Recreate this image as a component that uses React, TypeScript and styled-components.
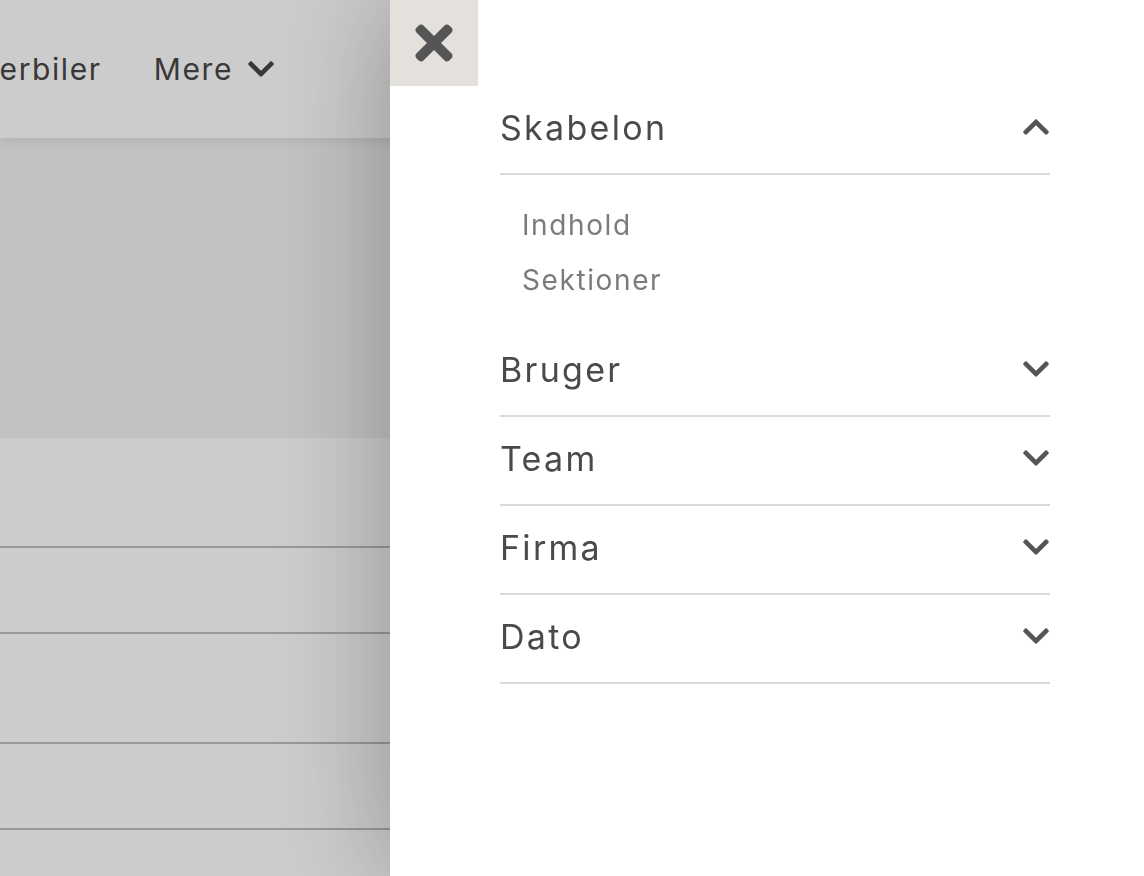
import React, { useState } from "react";
import styled, { createGlobalStyle } from "styled-components";
import { FaChevronDown, FaChevronUp, FaTimes } from "react-icons/fa";

const GlobalStyle = createGlobalStyle`
  * {
    box-sizing: border-box;
  }
  html, body {
    margin: 0;
    padding: 0;
    background: #fff;
    font-family: Inter, "Open Sans", "Liberation Sans", sans-serif;
    overflow: hidden;
  }
`;

type Section = {
  title: string;
  items: string[];
};

const sections: Section[] = [
  { title: "Skabelon", items: ["Indhold", "Sektioner"] },
  { title: "Bruger", items: [] },
  { title: "Team", items: [] },
  { title: "Firma", items: [] },
  { title: "Dato", items: [] },
];

const rowHeights = [108, 84, 108, 84];

export default function App() {
  const [open, setOpen] = useState<number>(0);

  return (
    <>
      <GlobalStyle />
      <Page>
        <TopBar>
          <Nav>
            <NavItem>Lagerbiler</NavItem>
            <NavItem>
              Mere
              <FaChevronDown size={30} />
            </NavItem>
          </Nav>
        </TopBar>
        <Hero />
        <Table>
          {rowHeights.map((h, i) => (
            <Row key={`row-${i}`} $height={h} />
          ))}
        </Table>
      </Page>

      <Overlay />

      <Drawer>
        <CloseButton aria-label="Luk">
          <FaTimes size={54} />
        </CloseButton>

        <Accordion>
          {sections.map((section, index) => {
            const isOpen = open === index;
            return (
              <Group key={section.title}>
                <GroupHeader
                  type="button"
                  onClick={() => setOpen(isOpen ? -1 : index)}
                >
                  <span>{section.title}</span>
                  {isOpen ? (
                    <FaChevronUp size={30} />
                  ) : (
                    <FaChevronDown size={30} />
                  )}
                </GroupHeader>
                {isOpen && section.items.length > 0 && (
                  <SubList>
                    {section.items.map((item) => (
                      <SubItem key={item}>{item}</SubItem>
                    ))}
                  </SubList>
                )}
              </Group>
            );
          })}
        </Accordion>
      </Drawer>
    </>
  );
}

/* underlying page */

const Page = styled.div`
  width: 100%;
  height: 876px;
  overflow: hidden;
  background: #fff;
`;

const TopBar = styled.header`
  position: relative;
  height: 138px;
  background: #fff;
  box-shadow: 0 2px 12px rgba(0, 0, 0, 0.1);
  display: flex;
  align-items: center;
`;

const Nav = styled.nav`
  width: 390px;
  padding-right: 114px;
  display: flex;
  justify-content: flex-end;
  align-items: center;
  gap: 52px;
  overflow: hidden;
`;

const NavItem = styled.a`
  display: inline-flex;
  align-items: center;
  gap: 13px;
  flex-shrink: 0;
  font-size: 30px;
  color: #474747;
  white-space: nowrap;
  letter-spacing: 1.6px;
`;

const Hero = styled.div`
  height: 300px;
  background: #f3f3f3;
`;

const Table = styled.div`
  display: flex;
  flex-direction: column;
`;

const Row = styled.div<{ $height: number }>`
  height: ${(p) => p.$height + 2}px;
  border-bottom: 2px solid #bfbfbf;
`;

/* drawer */

const Overlay = styled.div`
  position: fixed;
  inset: 0;
  z-index: 10;
  background: rgba(0, 0, 0, 0.2);
`;

const Drawer = styled.aside`
  position: fixed;
  top: 0;
  right: 0;
  bottom: 0;
  z-index: 11;
  width: 754px;
  background: #fff;
  box-shadow: 0 0 110px rgba(0, 0, 0, 0.3);
  display: flex;
  flex-direction: column;
`;

const CloseButton = styled.button`
  width: 88px;
  height: 86px;
  border: 0;
  padding: 0;
  background: #e4e1dd;
  color: #555;
  display: flex;
  align-items: center;
  justify-content: center;
  cursor: pointer;
`;

const Accordion = styled.div`
  margin-left: 110px;
  width: 550px;
  display: flex;
  flex-direction: column;
`;

const Group = styled.div`
  display: flex;
  flex-direction: column;
`;

const GroupHeader = styled.button`
  height: 89px;
  padding: 0 0 5px;
  border: 0;
  border-bottom: 2px solid #dadada;
  background: transparent;
  display: flex;
  align-items: center;
  justify-content: space-between;
  font-family: inherit;
  font-size: 34px;
  letter-spacing: 2.3px;
  color: #4a4a4a;
  text-align: left;
  cursor: pointer;

  svg {
    color: #555;
    margin-right: -1px;
  }
`;

const SubList = styled.ul`
  list-style: none;
  margin: 0;
  padding: 22px 0 21px 22px;
`;

const SubItem = styled.li`
  height: 55px;
  display: flex;
  align-items: center;
  font-size: 28px;
  letter-spacing: 1.6px;
  color: #7b7b7b;
`;
